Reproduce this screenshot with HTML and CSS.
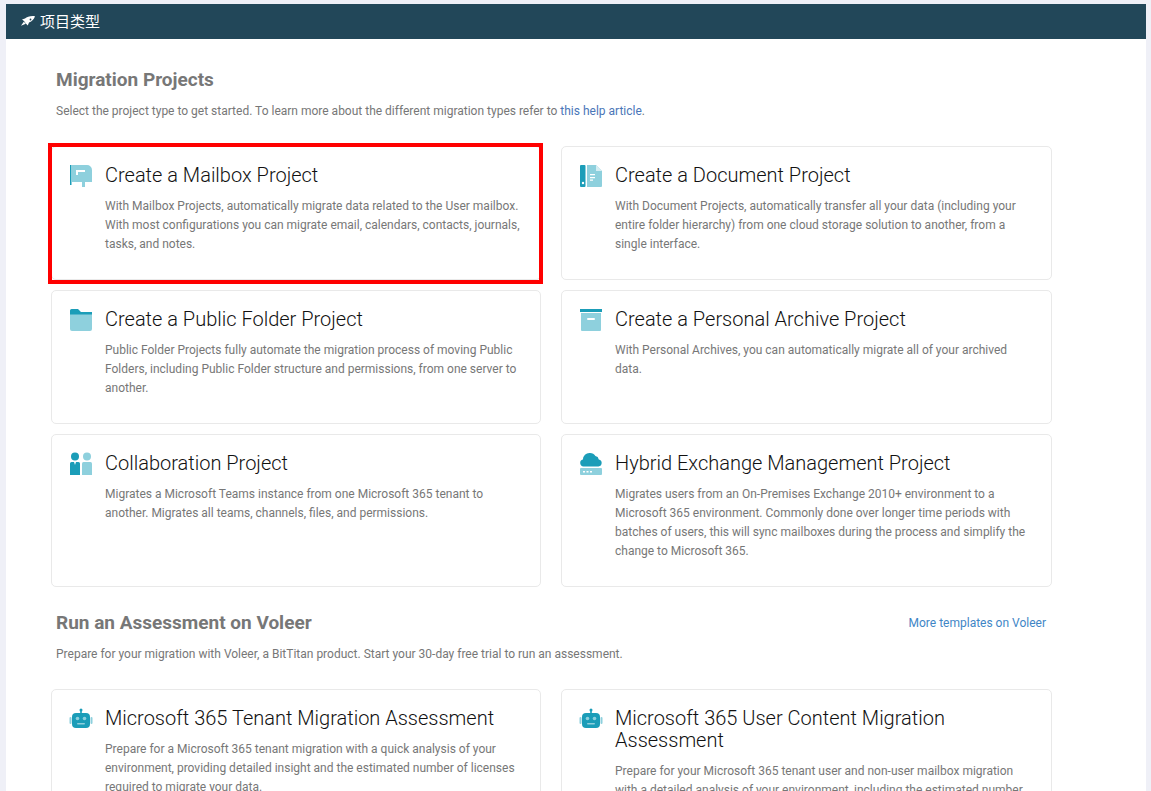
FILE: index.html
```html
<!DOCTYPE html>
<html lang="zh">
<head>
	<meta charset="UTF-8">
	<title>项目类型</title>
	<link rel="stylesheet" href="styles.css">
</head>
<body>
	<div class="panel">
		<div class="panel-head">
			<svg class="rocket" viewBox="0 0 14 10" width="14" height="10"><path d="M14 .2C10 -.4 6 .6 4 2.600L1 3.400 3 5 4.800 7.600 6.800 9.400 8 6.600C11 5.500 13.200 3 14 .2z" fill="#fff"/><path d="M2.800 5.800 0 9.800 4.800 7.800z" fill="#fff"/><circle cx="9.500" cy="3.500" r=".9" fill="#224759"/></svg>
			<span class="head-title">项目类型</span>
		</div>
		<div class="panel-body">
			<div class="section-head">
				<h2>Migration Projects</h2>
			</div>
			<p class="intro">Select the project type to get started. To learn more about the different migration types refer to <a href="#" class="help">this help article</a>.</p>

			<div class="cards">
				<div class="card selected">
					<svg class="icon" viewBox="0 0 24 24" width="24" height="24"><rect x="1" y="1" width="1.500" height="20" fill="#1b9db8"/><path d="M3 1h15a5 5 0 0 1 5 5v12h-7v5h-3v-5H3z" fill="#8ed0dd"/><path d="M7 6h9v2H9v3H7z" fill="#fff"/></svg>
					<div class="card-text">
						<h3>Create a Mailbox Project</h3>
						<p>With Mailbox Projects, automatically migrate data related to the User mailbox. With most configurations you can migrate email, calendars, contacts, journals, tasks, and notes.</p>
					</div>
				</div>
				<div class="card">
					<svg class="icon" viewBox="0 0 24 24" width="24" height="24"><rect x="1" y="1" width="5.500" height="22" rx="1" fill="#1b9db8"/><circle cx="4" cy="19" r="1.200" fill="#fff"/><path d="M8 1h9l6 6v15a1 1 0 0 1-1 1H8z" fill="#8ed0dd"/><path d="M17 1l6 6h-6z" fill="#d5eef3"/><path d="M11 10h5v1.200h-5zM11 13h5v1.200h-5zM11 15.500h3v1.200h-3z" fill="#fff"/></svg>
					<div class="card-text">
						<h3>Create a Document Project</h3>
						<p>With Document Projects, automatically transfer all your data (including your entire folder hierarchy) from one cloud storage solution to another, from a single interface.</p>
					</div>
				</div>
				<div class="card">
					<svg class="icon" viewBox="0 0 24 24" width="24" height="24"><path d="M1 5V2.500A1.500 1.500 0 0 1 2.500 1H9l3 3h11v3H1z" fill="#1b9db8"/><path d="M1 6.500h22V21a2 2 0 0 1-2 2H3a2 2 0 0 1-2-2z" fill="#8ed0dd"/></svg>
					<div class="card-text">
						<h3>Create a Public Folder Project</h3>
						<p>Public Folder Projects fully automate the migration process of moving Public Folders, including Public Folder structure and permissions, from one server to another.</p>
					</div>
				</div>
				<div class="card">
					<svg class="icon" viewBox="0 0 24 24" width="24" height="24"><rect x="1" y="1" width="22" height="3" fill="#1b9db8"/><path d="M2 5h20v17a1 1 0 0 1-1 1H3a1 1 0 0 1-1-1z" fill="#8ed0dd"/><rect x="8" y="10" width="8" height="2" rx="1" fill="#fff"/></svg>
					<div class="card-text">
						<h3>Create a Personal Archive Project</h3>
						<p>With Personal Archives, you can automatically migrate all of your archived data.</p>
					</div>
				</div>
				<div class="card">
					<svg class="icon" viewBox="0 0 24 24" width="24" height="24"><circle cx="6" cy="4.500" r="4" fill="#1b9db8"/><path d="M1 11.500A1.500 1.500 0 0 1 2.500 10H5l1 3 1-3h2.500A1.500 1.500 0 0 1 11 11.500V23H1z" fill="#1b9db8"/><circle cx="18" cy="4.500" r="4" fill="#8ed0dd"/><path d="M13 11.500a1.500 1.500 0 0 1 1.500-1.500h7a1.500 1.500 0 0 1 1.500 1.500V23H13z" fill="#8ed0dd"/></svg>
					<div class="card-text">
						<h3>Collaboration Project</h3>
						<p>Migrates a Microsoft Teams instance from one Microsoft 365 tenant to another. Migrates all teams, channels, files, and permissions.</p>
					</div>
				</div>
				<div class="card">
					<svg class="icon" viewBox="0 0 24 24" width="24" height="24"><path d="M4.500 14.500a3.500 3.500 0 0 1-.6-6.900A6.500 6.500 0 0 1 11 1c2.400 0 4.300 1.200 5.400 3.100a4 4 0 0 1 3.400 3.300A3.600 3.600 0 0 1 19.500 14.500z" fill="#1b9db8"/><rect x="1" y="16" width="22" height="7" rx="1" fill="#8ed0dd"/><path d="M4 19h2v1.500H4zM7.500 19h2v1.500h-2zM11 19h2v1.500h-2z" fill="#fff"/></svg>
					<div class="card-text">
						<h3>Hybrid Exchange Management Project</h3>
						<p>Migrates users from an On-Premises Exchange 2010+ environment to a Microsoft 365 environment. Commonly done over longer time periods with batches of users, this will sync mailboxes during the process and simplify the change to Microsoft 365.</p>
					</div>
				</div>
			</div>

			<div class="section-head voleer-head">
				<h2>Run an Assessment on Voleer</h2>
				<a href="#" class="more">More templates on Voleer</a>
			</div>
			<p class="intro">Prepare for your migration with Voleer, a BitTitan product. Start your 30-day free trial to run an assessment.</p>

			<div class="cards">
				<div class="card">
					<svg class="icon" viewBox="0 0 24 24" width="24" height="24"><use href="#bot"/></svg>
					<div class="card-text">
						<h3>Microsoft 365 Tenant Migration Assessment</h3>
						<p>Prepare for a Microsoft 365 tenant migration with a quick analysis of your environment, providing detailed insight and the estimated number of licenses required to migrate your data.</p>
					</div>
				</div>
				<div class="card">
					<svg class="icon" viewBox="0 0 24 24" width="24" height="24"><use href="#bot"/></svg>
					<div class="card-text">
						<h3>Microsoft 365 User Content Migration Assessment</h3>
						<p>Prepare for your Microsoft 365 tenant user and non-user mailbox migration with a detailed analysis of your environment, including the estimated number of licenses required to migrate your data.</p>
					</div>
				</div>
			</div>
		</div>
	</div>

	<svg class="defs" width="0" height="0">
		<symbol id="bot" viewBox="0 0 24 24">
			<circle cx="12" cy="3" r="1.500" fill="#1b9db8"/>
			<rect x="11.200" y="3" width="1.600" height="4" fill="#1b9db8"/>
			<rect x="3" y="6" width="18" height="15" rx="4" fill="#1b9db8"/>
			<rect x="0.500" y="10" width="2" height="7" rx="1" fill="#8ed0dd"/>
			<rect x="21.500" y="10" width="2" height="7" rx="1" fill="#8ed0dd"/>
			<circle cx="8.500" cy="11.500" r="1.800" fill="#8ed0dd"/>
			<circle cx="15.500" cy="11.500" r="1.800" fill="#8ed0dd"/>
			<rect x="8" y="16" width="8" height="1.600" rx=".8" fill="#8ed0dd"/>
		</symbol>
	</svg>
</body>
</html>
```
FILE: styles.css
```css
html, body {
	height: 100%;
	overflow: hidden;
}

body {
	margin: 0;
	padding: 4px 5px 0 6px;
	box-sizing: border-box;
	background-color: #eff0f7;
	font-family: Roboto, "Noto Sans CJK SC", sans-serif;
	color: #777;
}

.panel {
	background: #fff;
	min-height: 100%;
}

.panel-head {
	display: flex;
	align-items: center;
	gap: 5px;
	height: 35px;
	padding-left: 15px;
	background: #224759;
	color: #fff;
	font-size: 15px;
	box-sizing: border-box;
}

.head-title {
	margin-bottom: 2px;
}

.rocket {
	margin-bottom: 1px;
}

.panel-body {
	padding: 29px 0 0 45px;
	width: 1046px;
	box-sizing: border-box;
}

.section-head {
	display: flex;
	justify-content: space-between;
	align-items: center;
	padding: 0 6px 0 5px;
}

h2 {
	margin: 0;
	font-size: 19px;
	line-height: 24px;
	font-weight: 700;
	color: #777;
}

.intro {
	margin: 10px 0 26px;
	padding-left: 5px;
	font-size: 12px;
	line-height: 18px;
}

.help {
	color: #4a76b8;
	text-decoration: none;
}

.more {
	color: #3f86c6;
	font-size: 12px;
	text-decoration: none;
}

.cards {
	display: grid;
	grid-template-columns: 490px 491px;
	column-gap: 20px;
	row-gap: 10px;
}

.card {
	position: relative;
	display: flex;
	gap: 12px;
	padding: 17px 18px 25px 17px;
	box-sizing: border-box;
	border: 1px solid #e9e9e9;
	border-radius: 5px;
	background: #fff;
}

/* red highlight drawn over the card */
.card.selected::after {
	content: "";
	position: absolute;
	top: -4px;
	left: -4px;
	right: -3px;
	bottom: -5px;
	border: 4px solid #f00;
}

.icon {
	flex: none;
}

.card-text {
	min-width: 0;
}

h3 {
	margin: 0 0 11px;
	font-size: 20px;
	line-height: 22px;
	font-weight: 300;
	color: #111;
}

.card-text p {
	margin: 0;
	font-size: 12px;
	line-height: 19px;
}

.voleer-head {
	margin-top: 24px;
}

.defs {
	position: absolute;
}
```
